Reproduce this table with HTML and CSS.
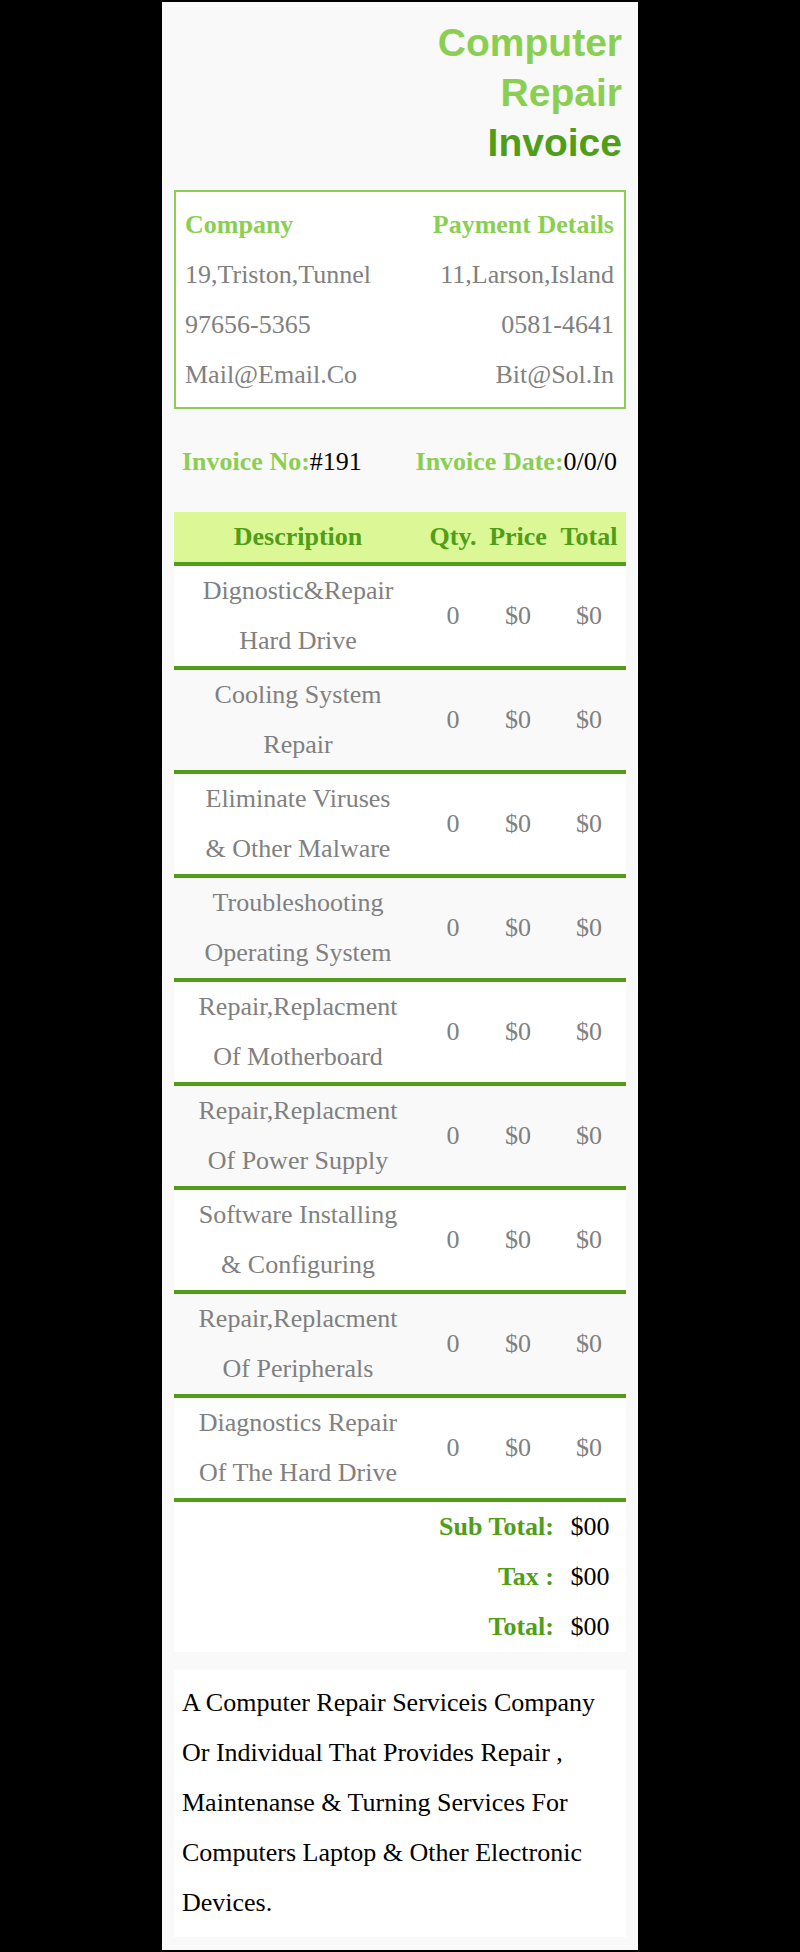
FILE: index.html
```html
<!DOCTYPE html>
<html>
<head>
<meta charset="utf-8">
<title>Computer Repair Invoice</title>
<link rel="stylesheet" href="styles.css">
</head>
<body>
<div class="sheet">
  <h1 class="title"><span class="light">Computer<br>Repair</span><br><span class="dark">Invoice</span></h1>

  <div class="parties">
    <div class="party">
      <div class="party-head">Company</div>
      <div>19,Triston,Tunnel</div>
      <div>97656-5365</div>
      <div>Mail@Email.Co</div>
    </div>
    <div class="party party-right">
      <div class="party-head">Payment Details</div>
      <div>11,Larson,Island</div>
      <div>0581-4641</div>
      <div>Bit@Sol.In</div>
    </div>
  </div>

  <div class="meta">
    <div><span class="meta-label">Invoice No:</span>#191</div>
    <div><span class="meta-label">Invoice Date:</span>0/0/0</div>
  </div>

  <div class="items">
    <div class="row head">
      <div>Description</div><div>Qty.</div><div>Price</div><div>Total</div>
    </div>
    <div class="row item">
      <div class="desc">Dignostic&amp;Repair<br>Hard Drive</div><div>0</div><div>$0</div><div>$0</div>
    </div>
    <div class="row item alt">
      <div class="desc">Cooling System<br>Repair</div><div>0</div><div>$0</div><div>$0</div>
    </div>
    <div class="row item">
      <div class="desc">Eliminate Viruses<br>&amp; Other Malware</div><div>0</div><div>$0</div><div>$0</div>
    </div>
    <div class="row item alt">
      <div class="desc">Troubleshooting<br>Operating System</div><div>0</div><div>$0</div><div>$0</div>
    </div>
    <div class="row item">
      <div class="desc">Repair,Replacment<br>Of Motherboard</div><div>0</div><div>$0</div><div>$0</div>
    </div>
    <div class="row item alt">
      <div class="desc">Repair,Replacment<br>Of Power Supply</div><div>0</div><div>$0</div><div>$0</div>
    </div>
    <div class="row item">
      <div class="desc">Software Installing<br>&amp; Configuring</div><div>0</div><div>$0</div><div>$0</div>
    </div>
    <div class="row item alt">
      <div class="desc">Repair,Replacment<br>Of Peripherals</div><div>0</div><div>$0</div><div>$0</div>
    </div>
    <div class="row item">
      <div class="desc">Diagnostics Repair<br>Of The Hard Drive</div><div>0</div><div>$0</div><div>$0</div>
    </div>
  </div>

  <div class="totals">
    <div class="total-row"><div class="total-label">Sub Total:</div><div class="total-value">$00</div></div>
    <div class="total-row"><div class="total-label">Tax :</div><div class="total-value">$00</div></div>
    <div class="total-row"><div class="total-label">Total:</div><div class="total-value">$00</div></div>
  </div>

  <p class="note">A Computer Repair Serviceis Company Or Individual That Provides Repair , Maintenanse &amp; Turning Services For Computers Laptop &amp; Other Electronic Devices.</p>
</div>
</body>
</html>
```

FILE: styles.css
```css
html, body {
  margin: 0;
  padding: 0;
  background: #000;
}

body {
  padding: 2px 0;
  font-family: "Liberation Serif", "Times New Roman", serif;
  font-size: 26px;
  line-height: 50px;
}

.sheet {
  width: 476px;
  margin: 0 auto;
  background: #f9f9f9;
  padding: 16px 12px 13px;
  box-sizing: border-box;
}

.title {
  margin: 0;
  padding-right: 4px;
  text-align: right;
  font-family: "Liberation Sans", Arial, sans-serif;
  font-weight: bold;
  font-size: 39px;
  line-height: 50px;
}

.light { color: #8acf52; }
.dark { color: #509e18; }

.parties {
  margin-top: 22px;
  display: flex;
  justify-content: space-between;
  background: #fff;
  border: 2px solid #8acf52;
  padding: 8px 10px 7px 9px;
  color: #808080;
}

.party-right { text-align: right; }

.party-head {
  color: #8acf52;
  font-weight: bold;
}

.meta {
  margin-top: 28px;
  padding: 0 9px 0 8px;
  display: flex;
  justify-content: space-between;
  color: #000;
}

.meta-label {
  color: #8acf52;
  font-weight: bold;
}

.items {
  margin-top: 25px;
}

.row {
  display: grid;
  grid-template-columns: 248px 62px 68px 74px;
  align-items: center;
  text-align: center;
  border-bottom: 4px solid #509e18;
}

.head {
  background: #dcf796;
  color: #509e18;
  font-weight: bold;
}

.item {
  background: #fff;
  color: #808080;
}

.item.alt {
  background: #f9f9f9;
}

.totals {
  background: #fff;
}

.total-row {
  display: grid;
  grid-template-columns: 380px 72px;
}

.total-label {
  text-align: right;
  color: #509e18;
  font-weight: bold;
}

.total-value {
  text-align: center;
  color: #000;
}

.note {
  margin: 18px 0 0;
  background: #fff;
  padding: 8px 8px 9px;
  color: #000;
}
```
